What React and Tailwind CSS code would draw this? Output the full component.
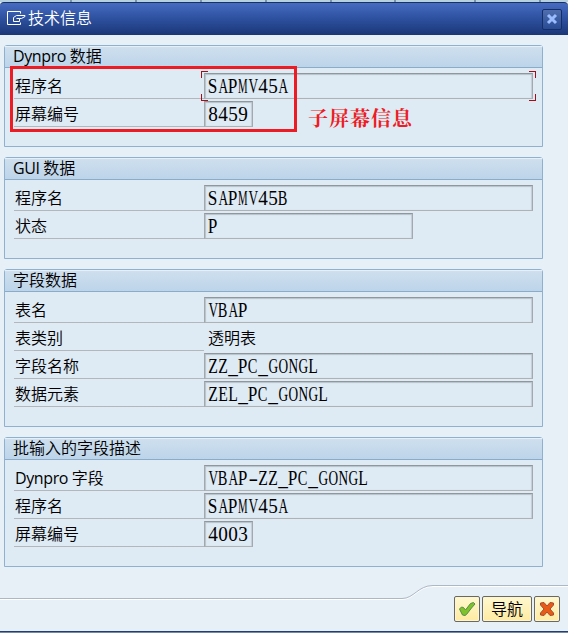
const sections = [
  { title: 'Dynpro 数据', height: 'h-[102px]', rows: [
    { label: '程序名', value: 'SAPMV45A', width: 'w-[329px]', focused: true },
    { label: '屏幕编号', value: '8459', width: 'w-[49px]' },
  ] },
  { title: 'GUI 数据', height: 'h-[102px]', rows: [
    { label: '程序名', value: 'SAPMV45B', width: 'w-[329px]' },
    { label: '状态', value: 'P', width: 'w-[209px]' },
  ] },
  { title: '字段数据', height: 'h-[158px]', rows: [
    { label: '表名', value: 'VBAP', width: 'w-[329px]' },
    { label: '表类别', value: '透明表', plain: true },
    { label: '字段名称', value: 'ZZ_PC_GONGL', width: 'w-[329px]' },
    { label: '数据元素', value: 'ZEL_PC_GONGL', width: 'w-[329px]' },
  ] },
  { title: '批输入的字段描述', height: 'h-[130px]', rows: [
    { label: 'Dynpro 字段', value: 'VBAP-ZZ_PC_GONGL', width: 'w-[329px]' },
    { label: '程序名', value: 'SAPMV45A', width: 'w-[329px]' },
    { label: '屏幕编号', value: '4003', width: 'w-[49px]' },
  ] },
];

const tabMarks = ['w-[70px]', 'w-[63px]', 'w-[63px]', 'w-[63px]', 'w-[63px]', 'w-[62px]', 'w-[78px]', 'w-[63px]'];

// Advance of each glyph in thousandths of an em, used to condense it into its cell.
const advances = { S: 556, A: 722, P: 556, M: 889, V: 722, B: 667, Z: 611, C: 667, G: 722, O: 722, N: 722, L: 611, E: 611, '-': 333 };

function FixedPitch({ text }) {
  return (
    <span className="flex whitespace-nowrap font-['Liberation_Serif',serif] text-[20px] leading-[24px]">
      {[...text].map((char, index) => (
        <span key={index} className="flex w-[10px] shrink-0 justify-center">
          <span className="block" style={{ transform: `scaleX(${480 / (advances[char] ?? 500)})` }}>{char}</span>
        </span>
      ))}
    </span>
  );
}

function Caption({ text }) {
  const [latin, rest] = text.includes(' ') ? text.split(' ') : ['', text];
  return <>{latin && <span className="font-normal tracking-[-0.4px]">{latin} </span>}{rest}</>;
}

function FocusCorners() {
  return (
    <>
      <i className="absolute -left-[4px] -top-[3px] h-[7px] w-[7px] border-l border-t border-[#a30d18]" />
      <i className="absolute -right-[4px] -top-[3px] h-[7px] w-[7px] border-r border-t border-[#a30d18]" />
      <i className="absolute -left-[4px] -bottom-[3px] h-[7px] w-[7px] border-b border-l border-[#a30d18]" />
      <i className="absolute -right-[4px] -bottom-[3px] h-[7px] w-[7px] border-b border-r border-[#a30d18]" />
    </>
  );
}

function Row({ label, value, width, plain, focused }) {
  return (
    <div className="flex h-[28px] items-start">
      <div className="h-[26px] w-[190px] shrink-0 border-b border-[#b4b6ba] pl-px leading-[26px]"><Caption text={label} /></div>
      {plain ? (
        <div className="pl-[4px] leading-[26px]">{value}</div>
      ) : (
        <div className={`relative h-[26px] border border-t-[#8f969c] border-r-[#a3a8ac] border-b-[#b0b1b3] border-l-[#a3a8ac] bg-[#deeaf4] pl-[3px] shadow-[inset_1px_1px_1px_#b7c1c9,inset_-1px_0_1px_#c3cdd5] ${width}`}>
          <FixedPitch text={value} />
          {focused && <FocusCorners />}
        </div>
      )}
    </div>
  );
}

function Section({ title, height, rows }) {
  return (
    <section className={`w-[539px] rounded-t-[3px] border border-[#8fb1cf] bg-[#deeaf4] ${height}`}>
      <h2 className="h-[22px] border-b border-[#8aabc9] bg-gradient-to-b from-[#cfe0ef] to-[#bdd4e9] pl-[8px] leading-[21px] font-[350] shadow-[inset_0_1px_0_#e5f0f8]"><Caption text={title} /></h2>
      <div className="pl-[9px] pt-[5px]">
        {rows.map((row) => <Row key={row.label} {...row} />)}
      </div>
    </section>
  );
}

const button = 'flex h-[26px] items-center justify-center rounded-[2px] border border-[#686866] bg-gradient-to-b from-[#fff8cf] to-[#ffeaa0] shadow-[inset_0_0_0_1px_#fff5cd]';

export default function App() {
  return (
    <main className="relative flex h-[633px] w-[568px] flex-col overflow-hidden bg-[#e8f0f7] font-['Open_Sans','Noto_Sans_CJK_SC',sans-serif] text-[16px] font-[350] text-black">
      <div className="flex h-[2px] shrink-0 gap-[2px] bg-[#7693a9]">
        {tabMarks.map((width, index) => <i key={index} className={`shrink-0 bg-[#b6d0e0] ${width}`} />)}
        <i className="flex-1 bg-[#b6d0e0]" />
      </div>
      <header className="flex h-[33px] shrink-0 items-center rounded-t-[4px] border-t border-[#173163] bg-gradient-to-b from-[#466bc1] via-[#2d509e] to-[#1b3777] pl-[7px] pr-[6px] text-white">
        <svg className="mb-[2px] h-[15px] w-[19px]" viewBox="0 0 19 15" fill="none" stroke="white">
          <path d="M13.5 2.5v-2H.5v13h13v-2" />
          <path d="M18 4.500H9.500L6.500 6.500v4h6v-3H9.500M18 4.500v1l-3.500 2h-2" strokeWidth="1" />
        </svg>
        <h1 className="ml-[2px] flex-1 pb-[2px] leading-[28px]">技术信息</h1>
        <button aria-label="关闭" className="flex h-[21px] w-[20px] items-center justify-center rounded-[2px] border border-[#142e67] bg-gradient-to-b from-[#506eae] to-[#284b95]">
          <svg className="h-[12px] w-[12px]" viewBox="0 0 12 12" stroke="#9bbdff" strokeWidth="3"><path d="m2 2 8 8M10 2l-8 8" /></svg>
        </button>
      </header>
      <div className="flex flex-col gap-[10px] pl-[4px] pt-[10px]">
        {sections.map((section) => <Section key={section.title} {...section} />)}
      </div>
      <div className="absolute left-[10px] top-[66px] h-[66px] w-[287px] border-[3px] border-[#ed1c24]" />
      <div className="absolute left-[308px] top-[105px] whitespace-nowrap font-['Liberation_Serif','Noto_Serif_CJK_SC','Noto_Sans_CJK_SC',serif] text-[20px] font-bold leading-[28px] tracking-[1px] text-[#ee1c25]">子屏幕信息</div>
      <footer className="relative mt-auto h-[49px] shrink-0 border-b border-[#7788a0]">
        <svg className="absolute inset-0 h-[48px] w-[568px]" viewBox="0 0 568 48" fill="none">
          <path d="M0 15.5H402C414 15.5 418 2.5 433 2.5H568" stroke="white" />
          <path d="M0 14.5H402C414 14.5 418 1.5 433 1.5H568" stroke="#adb8c5" />
        </svg>
        <div className="relative flex h-[48px] items-start justify-end gap-[2px] border-b border-[#203f79] pr-[8px] pt-[12px]">
          <button aria-label="确认" className={`${button} w-[26px]`}>
            <svg className="h-[16px] w-[18px]" viewBox="0 0 18 16"><path d="m1.5 8 2-2 2 .5 2 2.5 5-6.5 3-1 1.5 1.5-3.5 4-5 6.5-1.5 1-2.5-.5Z" fill="#7fc22b" stroke="#538e4b" /></svg>
          </button>
          <button className={`${button} w-[50px]`}>导航</button>
          <button aria-label="取消" className={`${button} w-[26px]`}>
            <svg className="h-[16px] w-[16px]" viewBox="0 0 16 16"><path d="m1.5 2 3.5-.5L8 5l3-3.5 3.5.5v2L11 8l3.5 4v2l-3.5.5L8 11l-3 3.5-3.5-.5v-2L5 8 1.5 4Z" fill="#e55b17" stroke="#a94a2a" /></svg>
          </button>
        </div>
      </footer>
    </main>
  );
}
